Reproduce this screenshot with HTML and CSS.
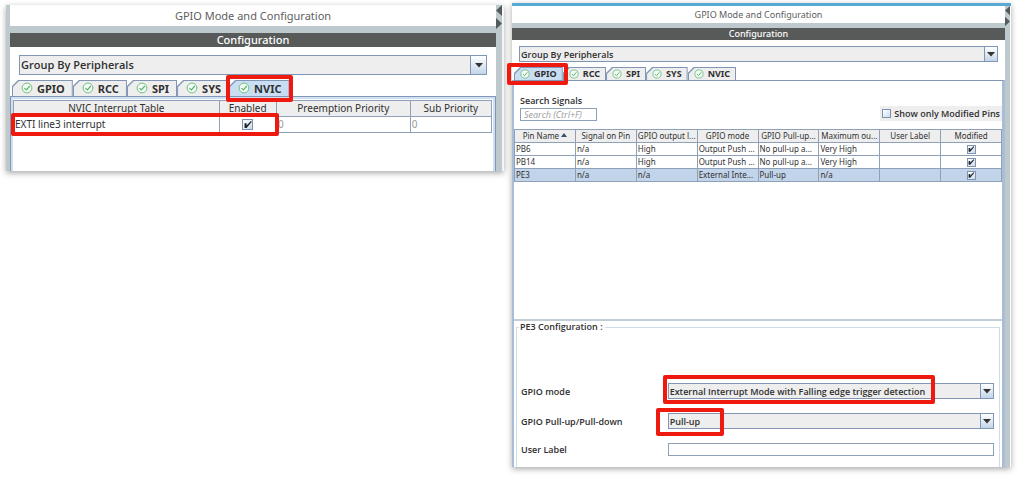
FILE: index.html
```html
<!DOCTYPE html>
<html lang="en">
<head>
<meta charset="utf-8">
<title>GPIO Mode and Configuration</title>
<link rel="stylesheet" href="styles.css">
</head>
<body>
<svg class="defs" aria-hidden="true">
  <symbol id="ok" viewBox="0 0 12 12"><circle cx="6" cy="6" r="4.9" fill="#f4faf5" stroke="#6fc07f" stroke-width="1"/><path d="M3.4 6.1 5.4 8 8.8 4" fill="none" stroke="#5bb56e" stroke-width="1.2"/></symbol>
  <symbol id="down" viewBox="0 0 8 5"><path d="M0 0h8L4 4.5z" fill="#333"/></symbol>
  <symbol id="split" viewBox="0 0 6 24"><path d="M6 0v11L0 5.5z M0 13v11l6-5.5z" fill="#555b5d"/></symbol>
</svg>
<main class="page">
  <section class="panel large">
    <div class="content">
      <h1 class="title">GPIO Mode and Configuration</h1>
      <h2 class="bar">Configuration</h2>
      <div class="group combo">
        <select aria-label="Grouping"><option>Group By Peripherals</option></select>
        <span class="arrow"><svg><use href="#down"/></svg></span>
      </div>
      <div class="tabs" role="tablist">
        <button class="tab" role="tab"><svg><use href="#ok"/></svg>GPIO</button>
        <button class="tab" role="tab"><svg><use href="#ok"/></svg>RCC</button>
        <button class="tab" role="tab"><svg><use href="#ok"/></svg>SPI</button>
        <button class="tab" role="tab"><svg><use href="#ok"/></svg>SYS</button>
        <div class="marked"><button class="tab active" role="tab" aria-selected="true"><svg><use href="#ok"/></svg>NVIC</button><span class="mark mark-nvic"></span></div>
      </div>
      <div class="pane">
        <div class="marked">
          <table class="grid">
            <colgroup><col class="c-name"><col class="c-on"><col class="c-pre"><col class="c-sub"></colgroup>
            <thead><tr><th>NVIC Interrupt Table</th><th>Enabled</th><th>Preemption Priority</th><th>Sub Priority</th></tr></thead>
            <tbody><tr><td>EXTI line3 interrupt</td><td><input type="checkbox" class="check" aria-label="Enable EXTI line3 interrupt" checked></td><td class="dim">0</td><td class="dim">0</td></tr></tbody>
          </table>
          <span class="mark mark-row"></span>
        </div>
      </div>
    </div>
    <div class="splitter"><svg><use href="#split"/></svg></div>
  </section>

  <section class="panel small">
    <div class="content">
      <h1 class="title">GPIO Mode and Configuration</h1>
      <h2 class="bar">Configuration</h2>
      <div class="group combo">
        <select aria-label="Grouping"><option>Group By Peripherals</option></select>
        <span class="arrow"><svg><use href="#down"/></svg></span>
      </div>
      <div class="tabs" role="tablist">
        <div class="marked"><button class="tab active" role="tab" aria-selected="true"><svg><use href="#ok"/></svg>GPIO</button><span class="mark mark-gpio"></span></div>
        <button class="tab" role="tab"><svg><use href="#ok"/></svg>RCC</button>
        <button class="tab" role="tab"><svg><use href="#ok"/></svg>SPI</button>
        <button class="tab" role="tab"><svg><use href="#ok"/></svg>SYS</button>
        <button class="tab" role="tab"><svg><use href="#ok"/></svg>NVIC</button>
      </div>
      <div class="pane">
        <div class="filters">
          <div class="search"><label for="search">Search Signals</label><input id="search" type="text" class="field" placeholder="Search (Ctrl+F)"></div>
          <label class="only"><input type="checkbox" class="check">Show only Modified Pins</label>
        </div>
        <div class="pins">
          <table class="grid">
            <thead><tr><th>Pin Name <svg class="sort" viewBox="0 0 6 4"><path d="M0 4h6L3 0z" fill="#35506b"/></svg></th><th>Signal on Pin</th><th>GPIO output l...</th><th>GPIO mode</th><th>GPIO Pull-up...</th><th>Maximum ou...</th><th>User Label</th><th>Modified</th></tr></thead>
            <tbody>
              <tr><td>PB6</td><td>n/a</td><td>High</td><td>Output Push ...</td><td>No pull-up a...</td><td>Very High</td><td></td><td><input type="checkbox" class="check" aria-label="PB6 modified" checked></td></tr>
              <tr><td>PB14</td><td>n/a</td><td>High</td><td>Output Push ...</td><td>No pull-up a...</td><td>Very High</td><td></td><td><input type="checkbox" class="check" aria-label="PB14 modified" checked></td></tr>
              <tr class="selected"><td>PE3</td><td>n/a</td><td>n/a</td><td>External Inte...</td><td>Pull-up</td><td>n/a</td><td></td><td><input type="checkbox" class="check" aria-label="PE3 modified" checked></td></tr>
            </tbody>
          </table>
        </div>
        <fieldset class="config">
          <legend>PE3 Configuration :</legend>
          <div class="row">
            <label for="mode">GPIO mode</label>
            <div class="combo"><select id="mode"><option>External Interrupt Mode with Falling edge trigger detection</option></select><span class="arrow"><svg><use href="#down"/></svg></span><span class="mark mark-mode"></span></div>
          </div>
          <div class="row">
            <label for="pull">GPIO Pull-up/Pull-down</label>
            <div class="combo"><select id="pull"><option>Pull-up</option></select><span class="arrow"><svg><use href="#down"/></svg></span><span class="mark mark-pull"></span></div>
          </div>
          <div class="row">
            <label for="user">User Label</label>
            <input id="user" type="text" class="field">
          </div>
        </fieldset>
      </div>
    </div>
    <div class="splitter"><svg><use href="#split"/></svg></div>
  </section>
</main>
</body>
</html>
```
FILE: styles.css
```css
* { box-sizing: border-box; }
body {
  margin: 0;
  background: #fff;
  color: #303030;
  font-family: "Noto Sans", "Open Sans", sans-serif;
}
.defs { position: absolute; width: 0; height: 0; }
.page {
  display: grid;
  grid-template-columns: 498fr 499fr;
  gap: 8px;
  align-items: start;
  padding: 3px 7px 11px 6px;
}
.panel {
  display: flex;
  background: #fff;
  box-shadow: 0 2px 6px rgba(0, 0, 0, 0.35);
}
.content { flex: 1; min-width: 0; display: flex; flex-direction: column; }
.splitter { background: #bdc9cd; }
.splitter svg { display: block; width: 6px; height: 24px; }
.title {
  margin: 0;
  text-align: center;
  font-weight: 400;
  color: #606060;
}
.bar {
  margin: 0;
  background: #585a59;
  color: #fff;
  text-align: center;
  font-weight: 500;
}
.marked { position: relative; }
.mark {
  position: absolute;
  z-index: 2;
  border: 4px solid #ee1a10;
  border-radius: 2px;
  pointer-events: none;
}

.combo { position: relative; display: flex; }
select {
  appearance: none;
  flex: 1;
  min-width: 0;
  margin: 0;
  padding: 0 20px 0 1px;
  border: 1px solid #8196b4;
  border-radius: 0;
  background: #eee;
  color: #303030;
  font: inherit;
  font-family: "Open Sans", "Noto Sans", sans-serif;
  font-weight: 600;
}
.arrow {
  position: absolute;
  top: 0;
  right: 0;
  bottom: 0;
  display: flex;
  align-items: center;
  justify-content: center;
  border: 1px solid #8196b4;
  background: linear-gradient(#fff, #c3d5e9);
  pointer-events: none;
}
.arrow svg { width: 8px; height: 5px; }
.field {
  border: 1px solid #8da0b8;
  background: #fff;
  font: inherit;
  font-weight: 400;
  border-radius: 0;
}

.tabs { display: flex; }
.tab {
  position: relative;
  z-index: 0;
  display: flex;
  align-items: center;
  border: 0;
  background: #8196b4;
  color: #303030;
  font: inherit;
  font-weight: 700;
  clip-path: polygon(0 100%, 0 6px, 6px 0, 100% 0, 100% 100%);
}
.tab::before {
  content: "";
  position: absolute;
  z-index: -1;
  inset: 1px 1px 0 1px;
  background: #eee;
  clip-path: polygon(0 100%, 0 6px, 6px 0, 100% 0, 100% 100%);
}
.tab.active::before { background: #c9def3; }

.pane { flex: 1; border-style: solid; border-color: #8196b4; }
.grid {
  width: 100%;
  border-collapse: collapse;
  table-layout: fixed;
}
.grid th, .grid td {
  padding: 0 1px;
  border: 1px solid #8fa1b9;
  white-space: nowrap;
  text-align: left;
  font-weight: 400;
}
.grid th { background: #eee; text-align: center; }
.grid .check { display: block; margin: 0 auto; }
.grid .dim { color: #999; }
.selected { background: #c2d4ea; }
.sort { width: 6px; height: 4px; vertical-align: 2px; }

.check {
  appearance: none;
  margin: 0;
  border: 1px solid #7f93ae;
  background: linear-gradient(135deg, #fff, #c9dcef);
}
.check:checked::after {
  content: "";
  display: block;
  height: 100%;
  background: #222;
  clip-path: polygon(15% 35%, 38% 35%, 38% 60%, 85% 10%, 95% 20%, 38% 90%, 15% 90%);
}

.large { margin-top: 2px; border-left: 4px solid #bdc9cd; border-right: 2px solid #f4f4f4; font-size: 11px; height: 166px; }
.large .bar { border-top: 7px solid #bdc9cd; line-height: 14px; font-size: 11px; }
.large .title { font-size: 11px; line-height: 21px; }
.large .group { margin: 8px 9px 5px; height: 20px; }
.large .group select { padding-bottom: 2px; }
.large .arrow { width: 17px; }
.large .tabs { padding-left: 2px; }
.large .tab { height: 16px; padding: 0 8px 0 9px; gap: 4px; }
.large .tab svg { width: 12px; height: 12px; }
.large .pane {
  border-width: 1px 1px 0;
  padding: 3px 3px 0 2px;
  box-shadow: inset 2px 2px #cfe0f3, inset -2px 0 #cfe0f3;
}
.large .grid { font-size: 10px; }
.large .grid tr { height: 16px; }
.large .grid th, .large .grid td { line-height: 15px; }
.large .check { width: 11px; height: 11px; }
.c-name { width: 43%; }
.c-on { width: 12%; }
.c-pre { width: 28%; }
.c-sub { width: 17%; }
.mark-nvic { inset: -5px -3px -6px -3px; }
.mark-row { top: 13px; left: -2px; width: 56%; height: 23px; }

.small { border-top: 3px solid #58a9d4; font-size: 9px; }
.small .splitter { width: 5px; margin-right: 1px; }
.small .splitter svg { width: 5px; height: 20px; }
.small .title { font-size: 9px; line-height: 17px; }
.small .bar { border-top: 5px solid #bdc9cd; line-height: 12px; font-size: 9px; }
.small .group { margin: 6px 7px 5px; height: 16px; }
.small .arrow { width: 14px; }
.small .tabs { padding-left: 2px; }
.small .tab { height: 13px; padding: 0 6px; gap: 4px; }
.small .tab svg { width: 10px; height: 10px; }
.small .pane { border-width: 1px 3px 0 2px; border-color: #8196b4 #a9bdd8 #a9bdd8; }
.mark-gpio { inset: -4px -5px -5px -7px; }
.filters {
  display: flex;
  justify-content: space-between;
  align-items: flex-end;
  padding: 13px 0 8px 6px;
  font-family: "Open Sans", "Noto Sans", sans-serif;
  font-weight: 600;
}
.search { display: flex; flex-direction: column; line-height: 14px; }
.search .field { width: 77px; height: 13px; padding: 0 3px; font-style: italic; }
.search .field::placeholder { color: #999; }
.only { display: flex; align-items: center; gap: 3px; height: 15px; padding: 0 2px; background: #eee; }
.small .check { width: 9px; height: 9px; }
.pins { height: 192px; border-bottom: 2px solid #c3cdd6; }
.small .grid { font-size: 8px; }
.small .grid tr { height: 13px; }
.small .grid th, .small .grid td { line-height: 12px; }
.config {
  display: flex;
  flex-direction: column;
  gap: 14px;
  margin: 0 2px;
  padding: 50px 5px 11px 4px;
  border: 1px solid #cfdcea;
  border-bottom: 0;
  font-family: "Open Sans", "Noto Sans", sans-serif;
  font-weight: 600;
  min-width: 0;
}
.config legend { margin-left: -2px; padding: 0 2px 0 1px; line-height: 12px; }
.row { display: grid; grid-template-columns: 31% 1fr; align-items: center; }
.row .combo { height: 16px; }
.row .field { height: 13px; width: 100%; }
.mark-mode { top: -8px; left: -5px; width: 272px; bottom: -5px; }
.mark-pull { top: -5px; left: -12px; width: 68px; bottom: -7px; }
```
